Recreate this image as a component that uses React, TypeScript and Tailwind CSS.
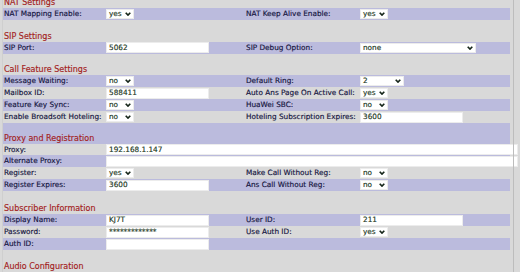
import React from "react";

const LAV = "bg-[#bbbbdd]";
const GRY = "bg-[#d9d9d9]";

function Chevron() {
  return (
    <svg width="6" height="4" viewBox="0 0 6 4" className="shrink-0">
      <path d="M0.7 0.7 L3 3.1 L5.3 0.7" fill="none" stroke="#16261a" strokeWidth="1.6" />
    </svg>
  );
}

function Sel({ value, w }: { value: string; w: string }) {
  return (
    <div className={`${w} h-[10px] bg-white border border-[#ececec] flex items-center justify-between pl-[2px] pr-[2px] text-[#1b361b]`}>
      <span className="leading-none">{value}</span>
      <Chevron />
    </div>
  );
}

function Inp({ value, w }: { value: string; w: string }) {
  return (
    <div className={`${w} h-[11px] bg-white border border-[#ececec] flex items-center pl-[2px] text-[#1b361b] whitespace-nowrap overflow-hidden`}>
      <span className="leading-none">{value}</span>
    </div>
  );
}

function Row({
  bg,
  l1,
  c1,
  l2,
  c2,
}: {
  bg: string;
  l1?: string;
  c1?: React.ReactNode;
  l2?: string;
  c2?: React.ReactNode;
}) {
  return (
    <div className={`shrink-0 grid grid-cols-[103px_139px_115px_150px] h-[12px] items-center ${bg}`}>
      <div className="pl-[1px] text-[#14143e] whitespace-nowrap leading-none">{l1}</div>
      <div>{c1}</div>
      <div className="pl-[1px] text-[#14143e] whitespace-nowrap leading-none">{l2}</div>
      <div>{c2}</div>
    </div>
  );
}

function FullRow({ bg, l1, c }: { bg: string; l1: string; c: React.ReactNode }) {
  return (
    <div className={`shrink-0 grid grid-cols-[103px_404px] h-[11.75px] items-center ${bg}`}>
      <div className="pl-[1px] text-[#14143e] whitespace-nowrap leading-none">{l1}</div>
      <div>{c}</div>
    </div>
  );
}

function Header({ text, bg, h = "h-[11px]" }: { text: string; bg: string; h?: string }) {
  return (
    <div className={`shrink-0 ${h} flex items-end pl-[1px] text-[8px] leading-none text-[#a31d1d] ${bg}`}>
      <span className="pb-[1px]">{text}</span>
    </div>
  );
}

function Gap({ bg, h = "h-[10.5px]" }: { bg: string; h?: string }) {
  return <div className={`shrink-0 ${h} ${bg}`} />;
}

export default function App() {
  return (
    <div
      className="w-[520px] h-[272px] overflow-hidden bg-[#d9d9d9] flex items-start text-[7.3px] [-webkit-text-stroke:0.15px]"
      style={{ fontFamily: '"DejaVu Sans", Verdana, sans-serif' }}
    >
      <div className="w-[3px] h-[272px] shrink-0 border-r border-[#cfcfcf]" />
      <div className="w-[507px] shrink-0 flex flex-col mt-[-3px]">
        <Header text="NAT Settings" bg={GRY} />
        <Row
          bg={LAV}
          l1="NAT Mapping Enable:"
          c1={<Sel value="yes" w="w-[28px]" />}
          l2="NAT Keep Alive Enable:"
          c2={<Sel value="yes" w="w-[28px]" />}
        />
        <Gap bg={GRY} />
        <Header text="SIP Settings" bg={GRY} />
        <Row
          bg={LAV}
          l1="SIP Port:"
          c1={<Inp value="5062" w="w-[103px]" />}
          l2="SIP Debug Option:"
          c2={<Sel value="none" w="w-[116px]" />}
        />
        <Gap bg={GRY} />
        <Header text="Call Feature Settings" bg={GRY} />
        <Row
          bg={LAV}
          l1="Message Waiting:"
          c1={<Sel value="no" w="w-[28px]" />}
          l2="Default Ring:"
          c2={<Sel value="2" w="w-[44px]" />}
        />
        <Row
          bg={GRY}
          l1="Mailbox ID:"
          c1={<Inp value="588411" w="w-[103px]" />}
          l2="Auto Ans Page On Active Call:"
          c2={<Sel value="yes" w="w-[28px]" />}
        />
        <Row
          bg={LAV}
          l1="Feature Key Sync:"
          c1={<Sel value="no" w="w-[28px]" />}
          l2="HuaWei SBC:"
          c2={<Sel value="no" w="w-[28px]" />}
        />
        <Row
          bg={GRY}
          l1="Enable Broadsoft Hoteling:"
          c1={<Sel value="no" w="w-[28px]" />}
          l2="Hoteling Subscription Expires:"
          c2={<Inp value="3600" w="w-[103px]" />}
        />
        <Gap bg={LAV} />
        <Header text="Proxy and Registration" bg={LAV} h="h-[10px]" />
        <FullRow bg={GRY} l1="Proxy:" c={<Inp value="192.168.1.147" w="w-[412px]" />} />
        <FullRow bg={LAV} l1="Alternate Proxy:" c={<Inp value="" w="w-[412px]" />} />
        <Row
          bg={GRY}
          l1="Register:"
          c1={<Sel value="yes" w="w-[28px]" />}
          l2="Make Call Without Reg:"
          c2={<Sel value="no" w="w-[28px]" />}
        />
        <Row
          bg={LAV}
          l1="Register Expires:"
          c1={<Inp value="3600" w="w-[103px]" />}
          l2="Ans Call Without Reg:"
          c2={<Sel value="no" w="w-[28px]" />}
        />
        <Gap bg={GRY} h="h-[12px]" />
        <Header text="Subscriber Information" bg={GRY} />
        <Row
          bg={LAV}
          l1="Display Name:"
          c1={<Inp value="KJ7T" w="w-[103px]" />}
          l2="User ID:"
          c2={<Inp value="211" w="w-[103px]" />}
        />
        <Row
          bg={GRY}
          l1="Password:"
          c1={<Inp value="*************" w="w-[103px]" />}
          l2="Use Auth ID:"
          c2={<Sel value="yes" w="w-[28px]" />}
        />
        <Row bg={LAV} l1="Auth ID:" c1={<Inp value="" w="w-[103px]" />} />
        <Gap bg={GRY} />
        <Header text="Audio Configuration" bg={GRY} />
        <Row
          bg={LAV}
          l1=""
          c1={<Inp value="" w="w-[48px]" />}
          l2=""
          c2={<Sel value="" w="w-[28px]" />}
        />
      </div>
      <div className="w-[3px] shrink-0" />
      <div className="w-[1px] h-[272px] shrink-0 bg-[#bdbdbd]" />
    </div>
  );
}
